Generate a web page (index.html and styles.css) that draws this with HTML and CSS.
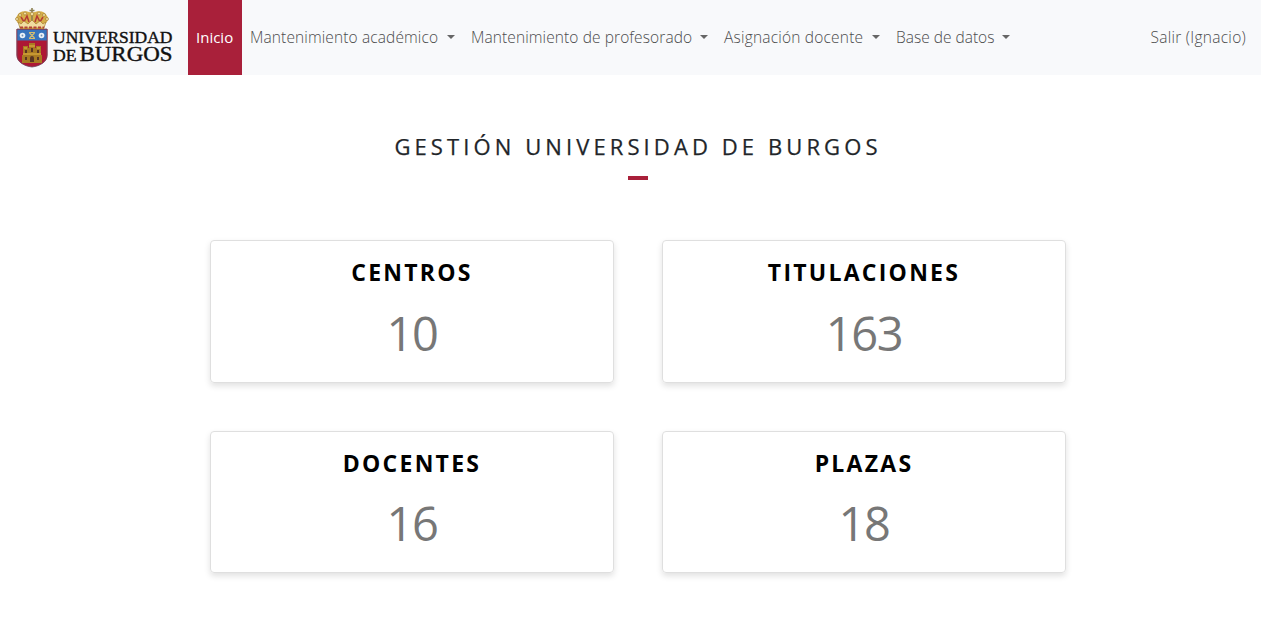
FILE: index.html
```html
<!DOCTYPE html>
<html lang="es">
<head>
<meta charset="utf-8">
<title>Gestión Universidad de Burgos</title>
<link rel="stylesheet" href="styles.css">
</head>
<body>
<nav class="navbar">
  <a class="brand" href="#">
    <svg width="160" height="62" viewBox="14 6 160 62" role="img" aria-label="Universidad de Burgos">
      <path d="M16.500 29V55c0 7 7 11 15.500 12 8.500-1 15.500-5 15.500-12V29z" fill="#ad1835"/>
      <path d="M17 29.500h30v11H17z" fill="#3874bd"/>
      <path d="M17 29V55c0 7 7 11 15 12 8-1 15-5 15-12V29z" fill="none" stroke="#6b4b60" stroke-width=".8"/>
      <path d="M32 13c-7-3-13-2-15 3-2 3-1 5 2 8l1 5h24l1-5c3-3 4-5 2-8-2-5-8-6-15-3z" fill="#d6ae49"/>
      <path d="M21 17l3 5 3-6 2 6M43 17l-3 5-3-6-2 6" stroke="#b53b35" stroke-width="1.500" fill="none"/>
      <path d="M32 8v17M29.500 10.500h5" stroke="#8c8152" stroke-width="1.600"/>
      <g fill="#f1dda0" stroke="#9b7328" stroke-width=".6">
        <circle cx="17" cy="19" r="1.500"/><circle cx="20" cy="15" r="1.500"/><circle cx="25" cy="13.500" r="1.500"/><circle cx="32" cy="14" r="1.800"/><circle cx="39" cy="13.500" r="1.500"/><circle cx="44" cy="15" r="1.500"/><circle cx="47" cy="19" r="1.500"/>
        <path d="M18 22l3 2 3-3 4 3 4-4 4 4 4-3 3 3 3-2-2 6H20z"/>
      </g>
      <path d="M20 27.500h24" stroke="#b64435" stroke-width="2" stroke-dasharray="3 1.500"/>
      <g fill="#e9f0f7"><circle cx="22.500" cy="35.500" r="2.800"/><circle cx="41.500" cy="35.500" r="2.800"/></g>
      <g fill="#6f8faf"><circle cx="22.500" cy="35.500" r=".9"/><circle cx="41.500" cy="35.500" r=".9"/></g>
      <path d="M29.500 33l5 5M34.500 33l-5 5M29 32.500h6M29 38.500h6" stroke="#d6bd70" stroke-width="1.200"/>
      <path d="M23 46h5v2h1v-5h6v5h1v-2h5v9h1v8H22v-8h1z" fill="#a97b22"/>
      <path d="M23 54h18M24 48h3M37 48h3M29 46h6" stroke="#e5b643" stroke-width="1.200"/>
      <path d="M25 50h2v3h-2zM37 50h2v3h-2zM31 48h2v4h-2zM30 62v-4a2 2 0 0 1 4 0v4zM25 57h2v3h-2zM37 57h2v3h-2z" fill="#593522"/>
      <g class="brand-text">
        <text x="53" y="42.500" font-size="17" textLength="119.500" lengthAdjust="spacingAndGlyphs">UNIVERSIDAD</text>
        <text x="53" y="61.300" font-size="17.500" textLength="23.500" lengthAdjust="spacingAndGlyphs">DE</text>
        <text x="79.500" y="61.300" font-size="21" textLength="93" lengthAdjust="spacingAndGlyphs">BURGOS</text>
      </g>
    </svg>
  </a>
  <a class="nav-link active" href="#">Inicio</a>
  <a class="nav-link academic" href="#">Mantenimiento académico<span class="caret"></span></a>
  <a class="nav-link staff" href="#">Mantenimiento de profesorado<span class="caret"></span></a>
  <a class="nav-link teaching" href="#">Asignación docente<span class="caret"></span></a>
  <a class="nav-link database" href="#">Base de datos<span class="caret"></span></a>
  <a class="nav-link logout" href="#">Salir (Ignacio)</a>
</nav>
<main>
  <h1 class="title">GESTIÓN UNIVERSIDAD DE BURGOS</h1>
  <div class="rule"></div>
  <section class="cards">
    <article class="card"><h2 class="card-title">CENTROS</h2><p class="count">10</p></article>
    <article class="card"><h2 class="card-title">TITULACIONES</h2><p class="count">163</p></article>
    <article class="card"><h2 class="card-title">DOCENTES</h2><p class="count">16</p></article>
    <article class="card"><h2 class="card-title">PLAZAS</h2><p class="count">18</p></article>
  </section>
</main>
</body>
</html>
```
FILE: styles.css
```css
* { box-sizing: border-box; }
body {
  margin: 0;
  background: #fff;
  color: #212529;
  font-family: "Open Sans", "Noto Sans", sans-serif;
}
.navbar {
  display: flex;
  align-items: stretch;
  height: 75px;
  padding: 0 15px 0 14px;
  background: #f8f9fb;
}
.brand { width: 174px; flex: none; padding-top: 6px; }
.brand svg { display: block; }
.brand-text { font-family: "Liberation Serif", serif; fill: #111; stroke: #111; stroke-width: .4px; }
.nav-link {
  display: flex;
  flex: none;
  align-items: center;
  justify-content: space-between;
  padding: 0 8px 2px;
  color: #4c4c4d;
  font-size: 15.5px;
  font-weight: 300;
  line-height: 24px;
  text-decoration: none;
  white-space: nowrap;
}
.active { width: 54px; background: #a9203a; color: #fff; font-weight: 400; font-size: 15px; }
.academic { width: 221px; letter-spacing: .12px; }
.staff { width: 253px; letter-spacing: .1px; }
.teaching { width: 172px; letter-spacing: .2px; }
.database { width: 130px; }
.logout { margin-left: auto; padding-right: 0; letter-spacing: .27px; }
.caret { border: 4px solid transparent; border-top-color: #666; border-bottom: 0; }
.title {
  margin: 55px 0 0 15px;
  font-size: 22px;
  line-height: 32px;
  font-weight: 400;
  letter-spacing: 4.1px;
  text-align: center;
  -webkit-text-stroke: .25px #212529;
}
.rule { width: 20px; height: 4px; margin: 14px 0 0 628px; background: #a9203a; }
.cards {
  display: grid;
  grid-template-columns: 404px 404px;
  grid-template-rows: 143px 142px;
  gap: 48px;
  margin: 60px 0 0 210px;
  padding-bottom: 48px;
}
.card {
  border: 1px solid #dfdfdf;
  border-radius: 4px;
  box-shadow: 0 3px 6px rgba(0, 0, 0, .12);
  text-align: center;
}
.card-title {
  margin: 14px 0 0;
  color: #000;
  font-size: 23px;
  font-weight: 700;
  line-height: 34px;
  letter-spacing: 2.25px;
}
.count {
  margin: 9px 0 0;
  color: #777;
  font-size: 47px;
  font-weight: 400;
  line-height: 70px;
  letter-spacing: -1.4px;
}
.card:nth-child(n+3) .count { margin-top: 8px; }
```
